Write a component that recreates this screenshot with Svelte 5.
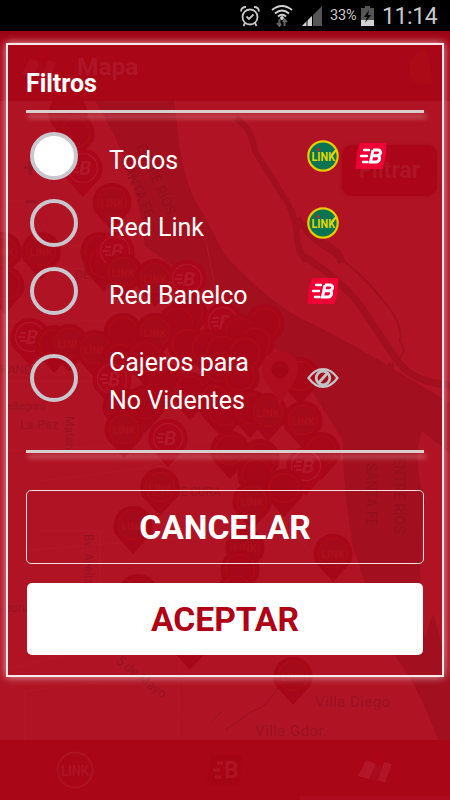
<script lang="ts">
  let selected = 'todos';

  const options = [
    { id: 'todos', lines: ['Todos'], icons: ['link', 'banelco'] },
    { id: 'link', lines: ['Red Link'], icons: ['link'] },
    { id: 'banelco', lines: ['Red Banelco'], icons: ['banelco'] },
    { id: 'novidentes', lines: ['Cajeros para', 'No Videntes'], icons: ['eye'] }
  ];

  // map coordinates are screen coordinates minus the header
  // kind: link, b (banelco), bare (label hidden by its neighbours)
  const pins = [
    { x: 68, y: 12, kind: 'bare' }, { x: 75, y: 32, kind: 'bare' }, { x: 83, y: 67, kind: 'b' },
    { x: 100, y: 150, kind: 'bare' }, { x: 104, y: 162, kind: 'bare' }, { x: 115, y: 150, kind: 'b' },
    { x: 112, y: 101, kind: 'link' }, { x: 2, y: 150, kind: 'link' }, { x: 41, y: 150, kind: 'link' },
    { x: 5, y: 184, kind: 'bare' }, { x: 123, y: 171, kind: 'link' }, { x: 155, y: 177, kind: 'link' },
    { x: 187, y: 178, kind: 'b' }, { x: 188, y: 212, kind: 'bare' }, { x: 178, y: 222, kind: 'bare' },
    { x: 123, y: 231, kind: 'bare' }, { x: 155, y: 231, kind: 'link' },
    { x: 223, y: 221, kind: 'b' }, { x: 265, y: 222, kind: 'bare' }, { x: 240, y: 232, kind: 'bare' },
    { x: 30, y: 236, kind: 'b' }, { x: 54, y: 243, kind: 'bare' }, { x: 69, y: 242, kind: 'link' },
    { x: 95, y: 248, kind: 'link' }, { x: 187, y: 243, kind: 'bare' }, { x: 207, y: 247, kind: 'bare' },
    { x: 222, y: 250, kind: 'bare' }, { x: 255, y: 242, kind: 'bare' }, { x: 245, y: 252, kind: 'bare' },
    { x: 120, y: 258, kind: 'bare' }, { x: 145, y: 256, kind: 'bare' }, { x: 220, y: 266, kind: 'bare' },
    { x: 240, y: 275, kind: 'bare' }, { x: 300, y: 275, kind: 'bare' }, { x: 112, y: 278, kind: 'b' },
    { x: 165, y: 281, kind: 'bare' }, { x: 190, y: 290, kind: 'bare' }, { x: 215, y: 300, kind: 'bare' },
    { x: 224, y: 310, kind: 'bare' }, { x: 122, y: 305, kind: 'bare' }, { x: 145, y: 303, kind: 'bare' },
    { x: 250, y: 308, kind: 'bare' }, { x: 268, y: 311, kind: 'link' }, { x: 303, y: 319, kind: 'link' },
    { x: 124, y: 328, kind: 'link' }, { x: 168, y: 337, kind: 'b' }, { x: 230, y: 349, kind: 'bare' },
    { x: 321, y: 350, kind: 'bare' }, { x: 260, y: 357, kind: 'bare' }, { x: 306, y: 365, kind: 'b' },
    { x: 257, y: 373, kind: 'bare' }, { x: 160, y: 386, kind: 'link' }, { x: 284, y: 387, kind: 'bare' },
    { x: 252, y: 400, kind: 'link' }, { x: 133, y: 424, kind: 'link' }, { x: 245, y: 446, kind: 'link' },
    { x: 333, y: 452, kind: 'link' }, { x: 240, y: 468, kind: 'bare' }, { x: 138, y: 492, kind: 'bare' },
    { x: 237, y: 490, kind: 'bare' }, { x: 190, y: 540, kind: 'bare' }, { x: 293, y: 575, kind: 'link' }
  ];
</script>

{#snippet banelco()}
  <svg class="brand" viewBox="0 0 32 28">
    <path d="M5 1H31.500L31 11C30.500 18 29 23 27 27H.5C.8 18 2 8 5 1Z" fill="#ef0035" />
    <path d="M9 8H14M6 14H12M8 20H12.500" stroke="#fff" stroke-width="2.400" stroke-linecap="round" />
    <path d="M18 8H23C27 8 26 13.700 22 13.700H17M22 13.700C26 13.700 25 20 21 20H15.500L18 8" fill="none" stroke="#fff" stroke-width="3" />
  </svg>
{/snippet}

{#snippet link()}
  <svg class="brand round" viewBox="0 0 32 32">
    <circle cx="16" cy="16" r="14.700" fill="#087452" stroke="#e5cc00" stroke-width="2.200" />
    <text x="4.500" y="21" textLength="23.500" lengthAdjust="spacingAndGlyphs" class="logo-text">LINK</text>
    <path d="M24.500 15.500L29 10" stroke="#e0d800" stroke-width="2" />
    <circle cx="11.500" cy="9.500" r="1.500" fill="#d8201c" />
  </svg>
{/snippet}

{#snippet mapIcon()}
  <svg class="map-icon" viewBox="0 0 36 32">
    <path d="M9 8L19 12L12 27L1 24Z" fill="#d34a5c" />
    <path d="M19 12L25 11L22 29L12 27Z" fill="#a92131" />
    <path d="M27 10L35 12L28 31L21 28Z" fill="#d84a5c" />
    <path d="M21 1C26 1 28 5 24 12L22 15L18 8C16 4 18 1 21 1Z" fill="#c40014" />
  </svg>
{/snippet}

<div class="phone">
  <div class="status">
    <svg class="alarm" viewBox="0 0 20 22" fill="none" stroke="#c8c8c8" stroke-width="1.800">
      <circle cx="10" cy="12" r="7.500" />
      <path d="M1 6.500C1 3 3 2 6 2M19 6.500C19 3 17 2 14 2M5 18L3.500 21M15 18L16.500 21M6.500 11.500L9 14L13.500 9.500" />
    </svg>
    <svg class="wifi" viewBox="0 0 22 23" fill="none" stroke="#d2d2d2" stroke-width="1.900">
      <path d="M1 6Q11-2 21 6M4 9.500Q11 3.500 18 9.500M7 12.500Q11 9 15 12.500" />
      <circle cx="11" cy="14" r="1" fill="#d2d2d2" />
      <path d="M8.500 15V21M6 19L8.500 22L10 19.500M13.500 22V16M12 18L13.500 15.500L16 18" stroke="#666" />
    </svg>
    <svg class="signal" viewBox="0 0 20 20">
      <path d="M0 20L20 0V20Z" fill="#555" />
      <path d="M0 20L10 10V20Z" fill="#d2d2d2" />
      <path d="M5 14V20M10.500 9V20" stroke="#000" stroke-width="1" />
    </svg>
    <span class="percent">33%</span>
    <svg class="battery" viewBox="0 0 13 20">
      <path d="M4 0H9V2H13V20H0V2H4Z" fill="#555" />
      <path d="M0 14H13V20H0Z" fill="#d2d2d2" />
      <path d="M8 4L3 11H6L4 17L10 9H7Z" fill="#050505" />
    </svg>
    <span class="clock">11:14</span>
  </div>

  <header>
    {@render mapIcon()}
    <span>Mapa</span>
    <svg class="flame" viewBox="0 0 28 38"><path d="M13 3Q19-1 20 7L25 36Q15 38 5 34Q-2 20 4 12Z" /></svg>
  </header>

  <main>
    <svg class="map" viewBox="0 0 450 639">
      <g class="water">
        <path d="M95 0H174L180 50Q188 92 202 111L225 154Q275 208 313 223Q363 249 400 272L450 302V352L422 330Q412 360 425 400Q416 455 429 499Q445 550 450 580V639H438Q415 575 388 547L353 446Q342 380 343 340L300 270L216 195L145 145Q137 65 95 0Z" />
      </g>
      <path class="land" d="M420 330L450 360V490Q430 510 425 540Q414 455 428 415Q438 372 420 330Z" />
      <g class="river">
        <path d="M236 17Q252 28 255 50L280 90Q295 110 297 133Q297 150 306 160" stroke-width="6" />
        <path d="M297 118Q318 145 340 153M304 155Q345 182 362 207L396 258Q412 282 450 284" stroke-width="7" />
        <path d="M320 141Q338 148 342 162" stroke-width="8" />
        <path d="M335 154Q362 172 380 196Q404 222 400 240Q408 250 398 258" stroke-width="2" />
        <path d="M391 262Q388 275 402 278Q425 288 424 296Q420 308 416 316" stroke-width="6" />
      </g>
      <g class="roads">
        <path d="M0 100H28L58 145H115M0 160L100 170M0 220H220M0 350L210 340M40 380L280 350M20 450L195 436M40 430H100V500M180 490L178 639M0 570L220 515M25 639V590L110 580M0 280H180M206 140L250 365L330 480" />
        <path class="dark" d="M212 620L222 610M225 629L253 610Q268 604 270 598L290 570" />
      </g>
      <g class="labels">
        <text x="23" y="75" class="plus">+</text>
        <text x="23" y="110" class="plus">−</text>
        <text x="82" y="167" font-size="12">LISA</text>
        <text x="75" y="178" font-size="12">DE LA</text>
        <text x="0" y="273" font-size="12">RANO</text>
        <text x="7" y="309" font-size="11">ellegrini</text>
        <text x="20" y="328" font-size="12" letter-spacing=".4">La Paz</text>
        <text x="172" y="395" font-size="12">GE CURA</text>
        <text x="315" y="606" font-size="15" letter-spacing=".4">Villa Diego</text>
        <text x="255" y="635" font-size="15" letter-spacing=".4">Villa Gdor.</text>
        <g class="provinces">
          <text transform="translate(120 60) rotate(66)">SANTA FE</text>
          <text transform="translate(136 45) rotate(66)">ENTRE RÍOS</text>
          <text transform="translate(366 362) rotate(90)">SANTA FE</text>
          <text transform="translate(394 356) rotate(90)">ENTRE RÍOS</text>
        </g>
        <text transform="translate(65 315) rotate(90)" font-size="12">Maten</text>
        <text transform="translate(84 433) rotate(90)" font-size="12">Bv. Avellaneda</text>
        <text transform="translate(115 561) rotate(38)" font-size="13">5 de Mayo</text>
        <text x="4" y="511" font-size="12">ourura</text>
      </g>
      {#each pins as pin}
        <g class="pin {pin.kind}" transform="translate({pin.x} {pin.y})">
          <path d="M-18 9Q-22-1-16-11Q-10-19 0-19Q10-19 16-11Q22-1 18 9L0 29Z" />
          <circle r="14.500" />
          {#if pin.kind === 'b'}
            <text class="letter" x="-4" y="7">B</text>
            <path class="dash" d="M-10-4H-4M-12 0H-5M-10 4H-4" />
          {:else if pin.kind === 'link'}
            <text x="-11.500" y="4.500" textLength="23" lengthAdjust="spacingAndGlyphs">LINK</text>
          {/if}
        </g>
      {/each}
      <path d="M280 250Q298 251 298 268C298 283 285 288 280 307C275 288 262 283 262 268Q262 251 280 250Z" fill="#ad0d1e" />
      <circle cx="280" cy="269" r="8.500" fill="#a30717" />
    </svg>
    <button class="filter">Filtrar</button>
  </main>

  <nav>
    <div>
      <svg class="tab-link" viewBox="0 0 38 38">
        <circle cx="19" cy="19" r="17.500" />
        <text x="5" y="25" textLength="28" lengthAdjust="spacingAndGlyphs">LINK</text>
      </svg>
    </div>
    <div>
      <svg class="tab-b" viewBox="0 0 38 34">
        <path class="back" d="M5 2H36L33 32H1Z" />
        <path d="M11 10H17M7 17H14M9 24H15" />
        <text x="18" y="25">B</text>
      </svg>
    </div>
    <div class="active">{@render mapIcon()}</div>
  </nav>

  <section class="dialog">
    <h2>Filtros</h2>
    <div class="rule"></div>
    <div class="options">
      {#each options as option}
        <label class:tall={option.lines.length > 1}>
          <input type="radio" name="filtro" value={option.id} bind:group={selected} />
          <span class="radio"></span>
          <span class="name">
            {#each option.lines as line}<span>{line}</span>{/each}
          </span>
          <span class="icons">
            {#each option.icons as icon}
              {#if icon === 'link'}
                {@render link()}
              {:else if icon === 'banelco'}
                {@render banelco()}
              {:else}
                <svg class="eye" viewBox="0 0 32 20" fill="none" stroke="#c4c4c4">
                  <path d="M1.500 10Q8 1.200 16 1.200T30.500 10Q24 18.800 16 18.800T1.500 10Z" stroke-width="2.200" />
                  <circle cx="16" cy="10" r="6.800" stroke-width="2.800" />
                  <path d="M11.500 15L20.500 5" stroke-width="2.800" />
                </svg>
              {/if}
            {/each}
          </span>
        </label>
      {/each}
    </div>
    <div class="rule"></div>
    <button class="cancel">CANCELAR</button>
    <button class="accept">ACEPTAR</button>
  </section>
</div>

<style>
  :global(body) {
    margin: 0;
    background: #a90618;
  }

  .phone {
    position: relative;
    display: flex;
    flex-direction: column;
    width: 450px;
    height: 800px;
    overflow: hidden;
    font-family: Roboto, sans-serif;
    color: white;
  }

  svg {
    display: block;
    flex: none;
  }

  button {
    font-family: inherit;
    padding: 0;
  }

  .status {
    display: flex;
    align-items: center;
    justify-content: flex-end;
    height: 31px;
    box-sizing: border-box;
    padding-right: 13px;
    background: #000;
    color: #c8c8c8;
  }

  .alarm {
    width: 20px;
    height: 22px;
  }

  .wifi {
    width: 22px;
    height: 23px;
    margin-left: 11px;
  }

  .signal {
    width: 20px;
    height: 20px;
    margin-left: 9px;
  }

  .percent {
    width: 28px;
    margin-left: 8px;
    font-size: 14.5px;
    letter-spacing: -0.2px;
    white-space: nowrap;
  }

  .battery {
    width: 13px;
    height: 20px;
    margin-left: 3px;
  }

  .clock {
    width: 55px;
    margin-left: 8px;
    padding-top: 2px;
    font-size: 23px;
    letter-spacing: -0.4px;
    white-space: nowrap;
  }

  header {
    display: flex;
    align-items: center;
    height: 70px;
    box-sizing: border-box;
    padding: 0 14px 0 21px;
    background: linear-gradient(#980515, #a90618 12px);
  }

  header .map-icon {
    opacity: 0.1;
  }

  header span {
    flex: 1;
    margin-left: 20px;
    font-size: 24.5px;
    font-weight: 700;
    color: #af1526;
  }

  .map-icon {
    width: 36px;
    height: 32px;
  }

  .flame {
    width: 28px;
    height: 38px;
  }

  .flame path {
    fill: #ad0a18;
  }

  main {
    position: relative;
    height: 639px;
    background: #b01424;
  }

  .map {
    width: 450px;
    height: 639px;
  }

  .water path {
    fill: #a20f1f;
  }

  .land {
    fill: #b01424;
  }

  .river path {
    fill: none;
    stroke: #a20f1f;
  }

  .roads path {
    fill: none;
    stroke: #b21828;
  }

  .roads .dark {
    stroke: #9c0f1e;
  }

  .labels text {
    fill: #9a1222;
  }

  .labels .plus {
    font-size: 26px;
    font-weight: 700;
  }

  .provinces text {
    fill: #930f1e;
    font-size: 14px;
  }

  .pin path {
    fill: #a60819;
  }

  .pin circle {
    fill: #a40a19;
    stroke: #ae0b18;
    stroke-width: 1.5px;
  }

  .pin text {
    fill: #af0e19;
    font-size: 10.5px;
    font-weight: 700;
  }

  .b path {
    fill: #ab061a;
  }

  .b circle {
    fill: #ab061a;
    stroke: #b01527;
  }

  .b .letter {
    fill: #b21629;
    font-size: 20px;
    font-style: italic;
  }

  .b .dash {
    stroke: #b21629;
    stroke-width: 2px;
  }

  .bare circle {
    fill: none;
  }

  .filter {
    position: absolute;
    top: 44px;
    right: 13px;
    width: 95px;
    height: 51px;
    border: 0;
    border-radius: 10px;
    background: #aa0518;
    box-shadow: 0 0 4px #a70a1a;
    color: #af1425;
    font-size: 23px;
    font-weight: 700;
  }

  nav {
    display: flex;
    height: 60px;
    background: #a90618;
  }

  nav div {
    display: flex;
    flex: 1;
    align-items: center;
    justify-content: center;
    box-sizing: border-box;
  }

  nav .active {
    border-bottom: 4px solid #ad0b1d;
  }

  nav .map-icon {
    opacity: 0.22;
  }

  .tab-link {
    width: 38px;
    height: 38px;
  }

  .tab-link circle {
    fill: none;
    stroke: #ad1222;
    stroke-width: 2px;
  }

  .tab-link text,
  .tab-b text {
    fill: #ae1324;
    font-size: 15px;
    font-weight: 700;
  }

  .tab-b {
    width: 38px;
    height: 34px;
  }

  .tab-b path {
    stroke: #ae1324;
    stroke-width: 3px;
  }

  .tab-b .back {
    fill: #a60516;
    stroke: none;
  }

  .tab-b text {
    font-size: 23px;
  }

  .dialog {
    position: absolute;
    top: 43px;
    left: 6px;
    width: 438px;
    height: 634px;
    box-sizing: border-box;
    padding: 23px 18px 0;
    border: 2px solid #f8e8e8;
    box-shadow: 0 0 8px rgba(255, 235, 240, 0.7);
  }

  h2 {
    margin: 0;
    height: 42px;
    font-size: 25px;
    line-height: 32px;
    font-weight: 700;
    letter-spacing: -0.05px;
  }

  .rule {
    height: 3px;
    background: #d9d0cb;
    box-shadow: 2px 5px 5px rgba(255, 220, 225, 0.42);
  }

  .options {
    height: 337px;
    padding-top: 9px;
    box-sizing: border-box;
  }

  label {
    display: flex;
    align-items: center;
    height: 67.5px;
  }

  .tall {
    height: 106px;
  }

  input {
    appearance: none;
    width: 0;
    height: 0;
    margin: 0;
  }

  .radio {
    width: 48px;
    height: 48px;
    box-sizing: border-box;
    margin-left: 4px;
    border: 4px solid #c9c6cd;
    border-radius: 50%;
  }

  input:checked + .radio {
    background: #fff;
  }

  .name {
    display: flex;
    flex-direction: column;
    width: 198px;
    margin-left: 31px;
    padding-top: 9px;
    font-size: 25px;
    line-height: 37.5px;
  }

  .tall .name {
    padding-top: 8px;
  }

  .icons {
    display: flex;
    align-items: center;
    gap: 16px;
  }

  .brand {
    width: 32px;
    height: 28px;
  }

  .brand.round {
    height: 32px;
  }

  .logo-text {
    fill: #e0d800;
    font-size: 12.5px;
    font-weight: 700;
  }

  .eye {
    width: 32px;
    height: 20px;
  }

  .cancel,
  .accept {
    display: block;
    box-sizing: border-box;
    border-radius: 5px;
    font-size: 33.6px;
    font-weight: 700;
  }

  .cancel {
    width: 398px;
    height: 74px;
    margin-top: 37px;
    border: 1.5px solid #f4e0dc;
    background: transparent;
    color: #fff;
  }

  .accept {
    width: 396px;
    height: 72px;
    margin: 19px 1px 0;
    border: 0;
    background: #fff;
    color: #b00015;
  }
</style>
